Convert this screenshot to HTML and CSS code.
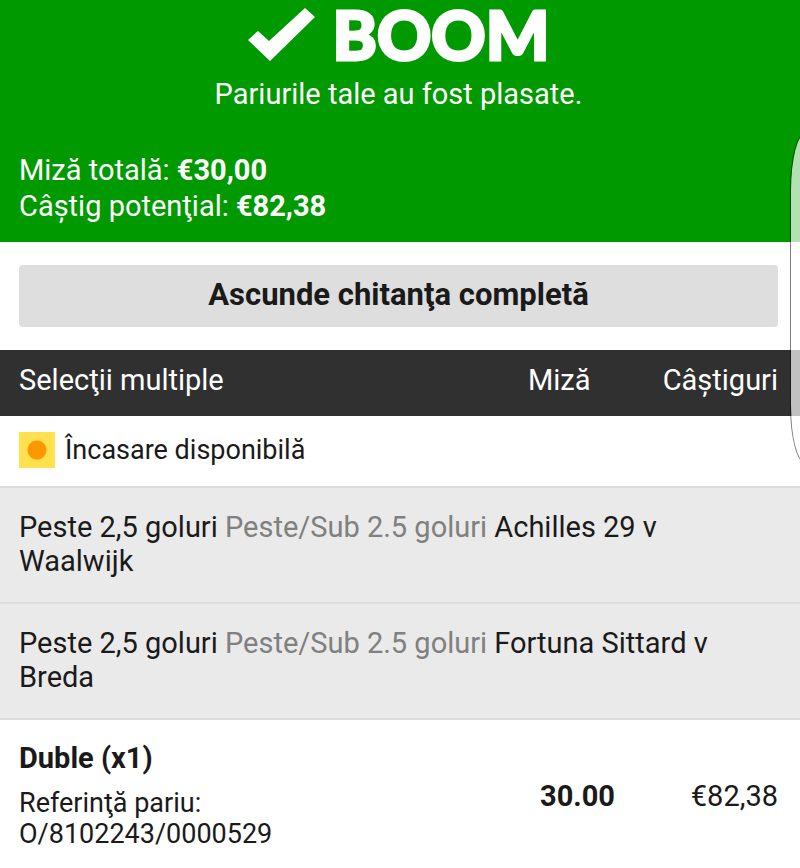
FILE: index.html
```
<!DOCTYPE html>
<html lang="ro">

<head>
    <meta charset="UTF-8">
    <meta name="viewport" content="width=device-width, initial-scale=1.0">
    <title>Pariuri plasate</title>
    <link rel="stylesheet" href="styles.css">
</head>

<body>
    <header class="confirm">
        <h1 class="confirm__title">
            <svg class="confirm__check" viewBox="0 0 67 53" aria-hidden="true">
                <path d="M0 32 L10 23 L21 33 L57 0 L67 9 L22 53 Z" fill="#fff"/>
            </svg>
            <span>BOOM</span>
        </h1>
        <p class="confirm__text">Pariurile tale au fost plasate.</p>
        <div class="totals">
            <p>Miză totală: <strong>€30,00</strong></p>
            <p>Câştig potenţial: <strong>€82,38</strong></p>
        </div>
    </header>
    <main>
        <div class="actions">
            <button class="toggle" type="button">Ascunde chitanţa completă</button>
        </div>
        <table class="receipt">
            <thead>
                <tr>
                    <th class="col-name" scope="col">Selecţii multiple</th>
                    <th class="col-stake" scope="col">Miză</th>
                    <th class="col-win" scope="col">Câştiguri</th>
                </tr>
            </thead>
            <tbody>
                <tr>
                    <td colspan="3">
                        <div class="cashout">
                            <span class="cashout__icon"></span>
                            <span>Încasare disponibilă</span>
                        </div>
                    </td>
                </tr>
                <tr class="selection">
                    <td colspan="3">Peste 2,5 goluri <span class="market">Peste/Sub 2.5 goluri</span> Achilles 29 v Waalwijk</td>
                </tr>
                <tr class="selection">
                    <td colspan="3">Peste 2,5 goluri <span class="market">Peste/Sub 2.5 goluri</span> Fortuna Sittard v Breda</td>
                </tr>
                <tr class="bet">
                    <td>
                        <h2 class="bet__type">Duble (x1)</h2>
                        <p class="bet__ref">Referinţă pariu:<br>O/8102243/0000529</p>
                    </td>
                    <td class="bet__stake">30.00</td>
                    <td class="bet__win">€82,38</td>
                </tr>
            </tbody>
        </table>
    </main>
    <div class="edge-panel"></div>
</body>

</html>
```
FILE: styles.css
```
* {
    box-sizing: border-box;
    margin: 0;
    padding: 0;
}

body {
    position: relative;
    background: #fff;
    color: #1a1a1a;
    font-family: Roboto, sans-serif;
    font-size: 29px;
    line-height: 34px;
    overflow-x: hidden;
}

.confirm {
    background: #009900;
    color: #fff;
    padding: 0 22px 18px 19px;
}

.confirm__title {
    display: flex;
    align-items: center;
    justify-content: center;
    gap: 18px;
    font-family: Lato, sans-serif;
    font-weight: 900;
    font-size: 67px;
    line-height: 68px;
    -webkit-text-stroke: 3px #fff;
}

.confirm__check {
    width: 67px;
    height: 53px;
}

.confirm__text {
    margin-top: 9px;
    text-align: center;
}

.totals {
    margin-top: 41px;
    line-height: 36px;
}

.actions {
    padding: 23px 22px 23px 19px;
}

.toggle {
    display: block;
    width: 100%;
    height: 62px;
    padding-bottom: 4px;
    border: none;
    border-radius: 4px;
    background: #dedede;
    color: #1a1a1a;
    font: bold 31px Roboto, sans-serif;
}

.receipt {
    width: 100%;
    border-collapse: collapse;
    table-layout: fixed;
}

.receipt th {
    padding: 13px 0 19px;
    background: #303030;
    color: #fff;
    font-weight: normal;
    text-align: left;
}

.receipt .col-name {
    padding-left: 19px;
}

.receipt .col-stake {
    width: 126px;
}

.receipt .col-win {
    width: 146px;
    padding-right: 22px;
    text-align: right;
}

.cashout {
    display: flex;
    align-items: center;
    gap: 10px;
    padding: 16px 19px 18px;
    font-size: 27px;
    line-height: 36px;
}

.cashout__icon {
    width: 36px;
    height: 36px;
    background: radial-gradient(circle, #ff9800 9px, #ffe04f 10px);
}

.selection td {
    padding: 22px 22px 24px 19px;
    border-top: 2px solid #dcdcdc;
    border-bottom: 2px solid #dcdcdc;
    background: #eaeaea;
}

.market {
    color: #808080;
}

.bet td {
    padding: 21px 0 18px;
}

.bet td:first-child {
    padding-left: 19px;
}

.bet__type {
    font-size: 29px;
}

.bet__ref {
    margin-top: 13px;
    font-size: 27px;
    line-height: 31px;
}

.bet .bet__stake {
    padding-left: 12px;
    font-weight: bold;
}

.bet .bet__win {
    padding-right: 22px;
    text-align: right;
}

/* pull-out handle at the screen edge */
.edge-panel {
    position: absolute;
    top: 132px;
    right: -22px;
    width: 32px;
    height: 332px;
    border: 1px solid rgba(0, 0, 0, 0.5);
    border-radius: 22px / 80px;
    background: rgba(255, 255, 255, 0.7);
    background-clip: padding-box;
}
```
